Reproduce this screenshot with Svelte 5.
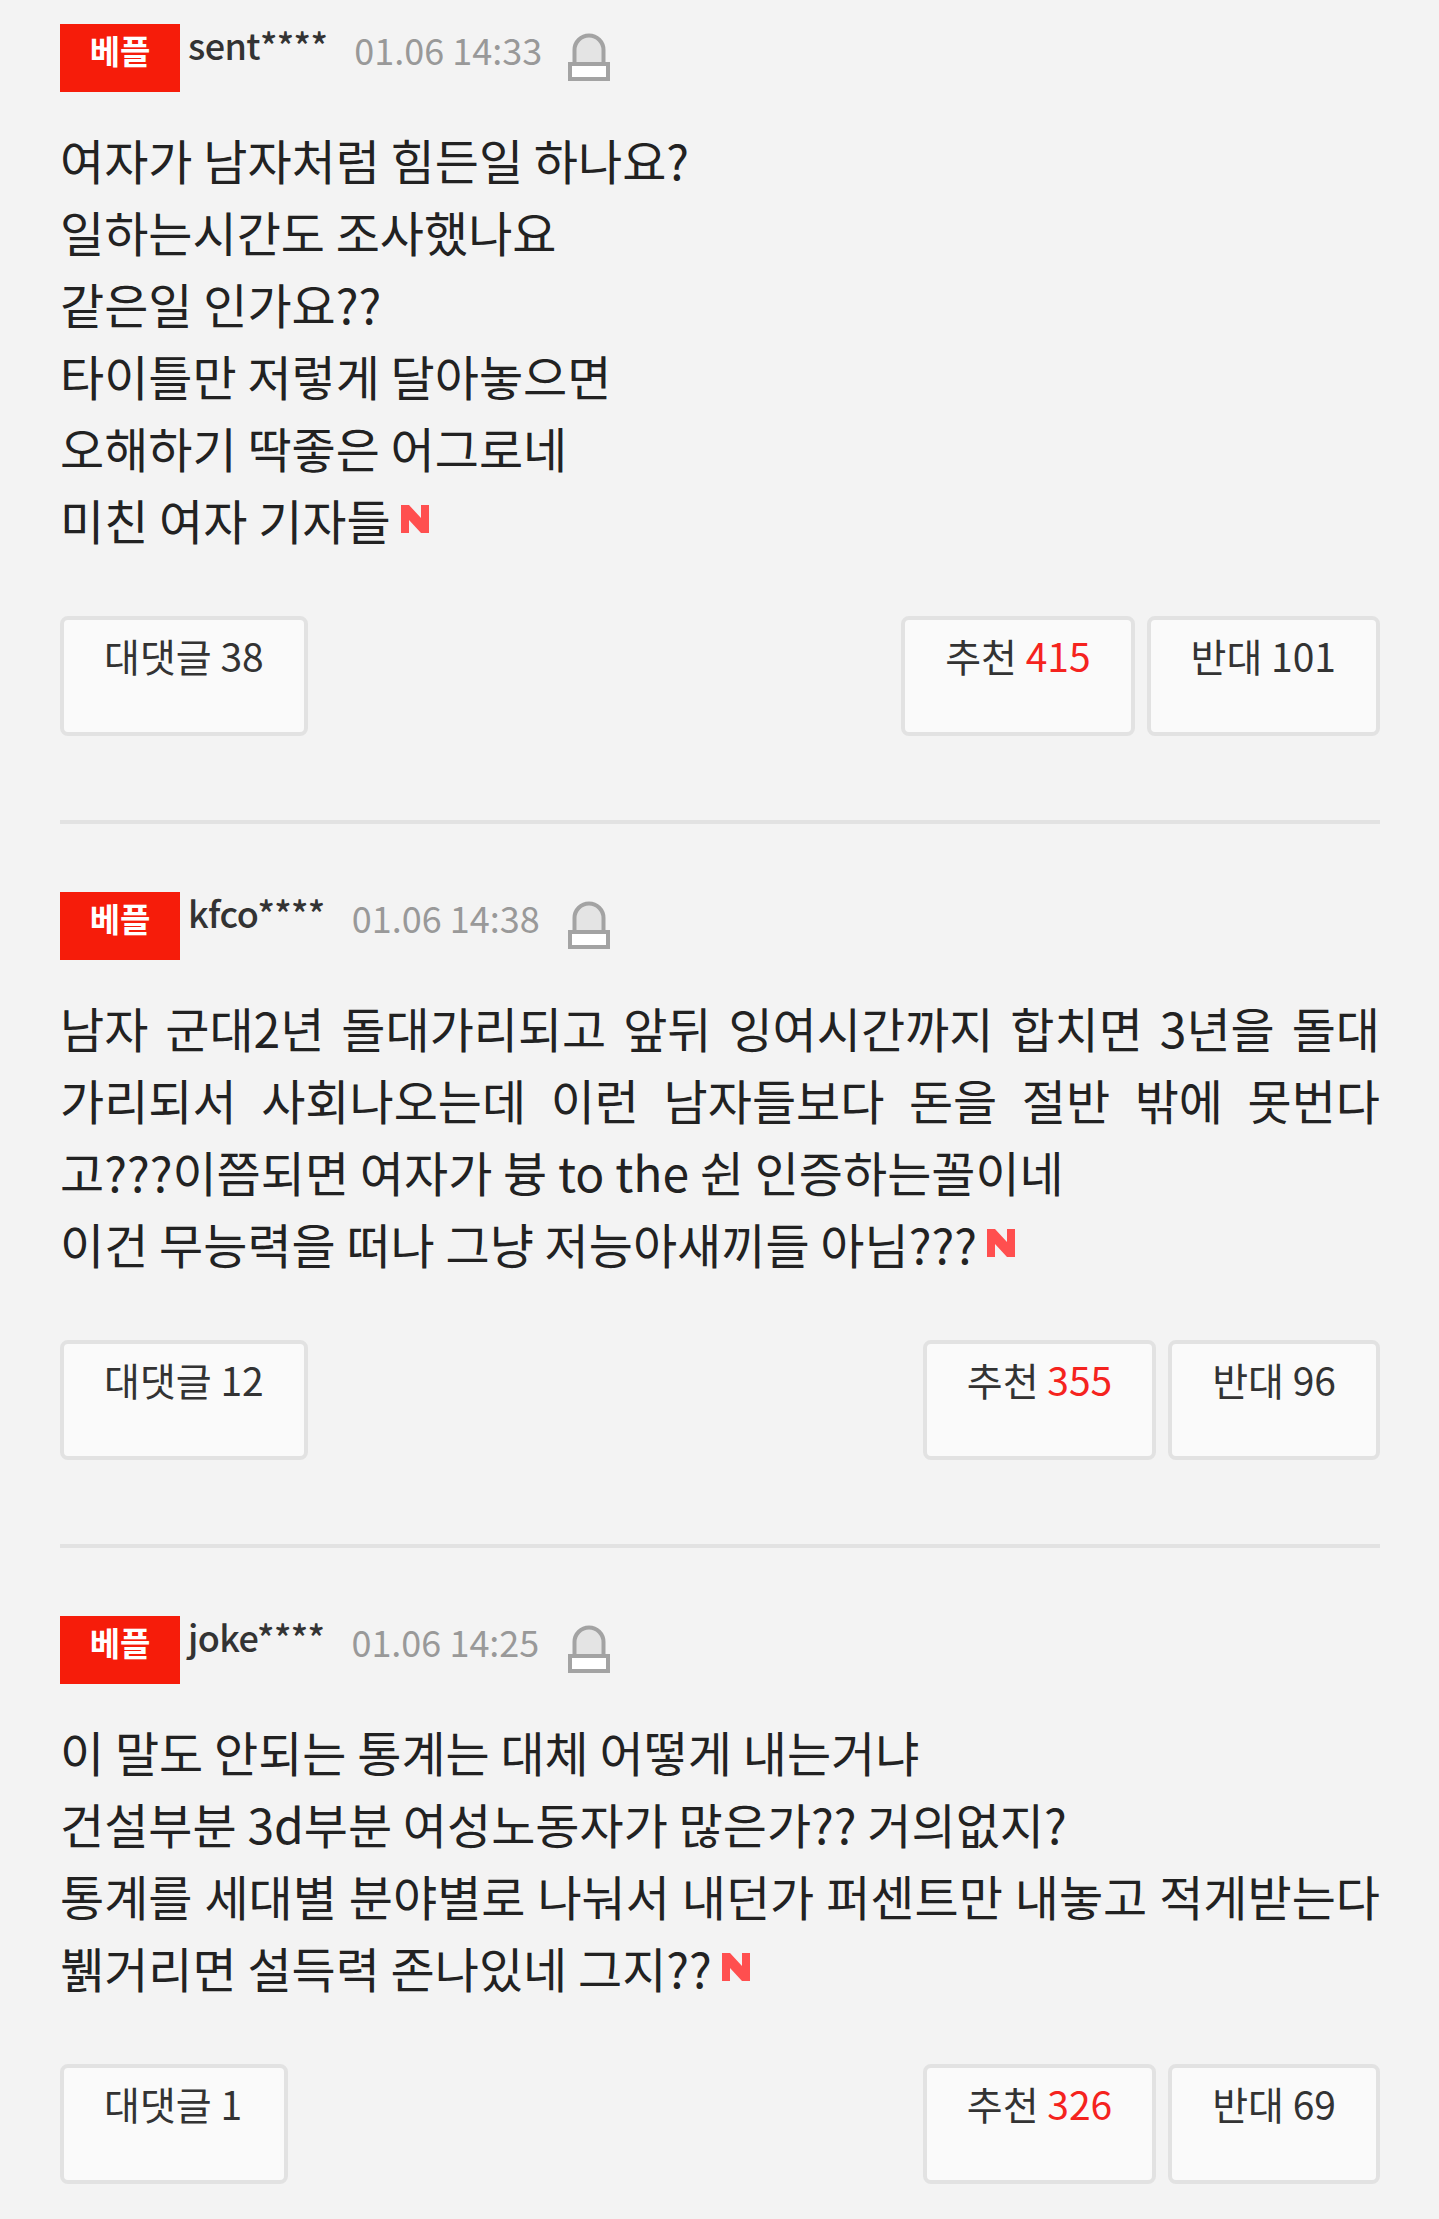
<script>
  const comments = [
    { name: 'sent****', date: '01.06 14:33', lines: ['여자가 남자처럼 힘든일 하나요?', '일하는시간도 조사했나요', '같은일 인가요??', '타이틀만 저렇게 달아놓으면', '오해하기 딱좋은 어그로네', '미친 여자 기자들'], replies: 38, up: 415, down: 101 },
    { name: 'kfco****', date: '01.06 14:38', lines: ['남자 군대2년 돌대가리되고 앞뒤 잉여시간까지 합치면 3년을 돌대가리되서 사회나오는데 이런 남자들보다 돈을 절반 밖에 못번다고???이쯤되면 여자가 븅 to the 쉰 인증하는꼴이네', '이건 무능력을 떠나 그냥 저능아새끼들 아님???'], replies: 12, up: 355, down: 96 },
    { name: 'joke****', date: '01.06 14:25', lines: ['이 말도 안되는 통계는 대체 어떻게 내는거냐', '건설부분 3d부분 여성노동자가 많은가?? 거의없지?', '통계를 세대별 분야별로 나눠서 내던가 퍼센트만 내놓고 적게받는다 뷁거리면 설득력 존나있네 그지??'], replies: 1, up: 326, down: 69 }
  ];
</script>

<main class="list">
  {#each comments as c, i}
    <article class="comment">
      <header class="head">
        <span class="badge">베플</span>
        <span class="meta">
          <span class="name">{c.name}</span>
          <span class="date">{c.date}</span>
        </span>
        <svg class="lamp" width="42" height="49" viewBox="0 0 42 49" aria-hidden="true">
          <path d="M6.500 33V18a14.500 14.500 0 0 1 29 0V33Z" fill="#e4e4e4" stroke="#a3a3a3" stroke-width="4" />
          <rect x="2" y="32" width="38" height="15" fill="#fff" stroke="#a3a3a3" stroke-width="4" />
        </svg>
      </header>
      <p class="body">
        {#each c.lines as line, j}
          {line}{#if j < c.lines.length - 1}<br />{/if}
        {/each}<svg class="new" width="28" height="28" viewBox="0 0 28 28" aria-hidden="true"><path d="M0 0H8L20 13V0H28V28H20L8 15V28H0Z" fill="#ff4f4f" /></svg>
      </p>
      <div class="actions">
        <span class="btn reply">대댓글 {c.replies}</span>
        <span class="votes">
          <span class="btn">추천 <em>{c.up}</em></span>
          <span class="btn">반대 {c.down}</span>
        </span>
      </div>
    </article>
  {/each}
</main>

<style>
  :global(body) {
    margin: 0;
    background: #f3f3f3;
  }
  .list {
    padding: 0 59px 36px 60px;
    font-family: "Noto Sans CJK KR", "Noto Sans", sans-serif;
    color: #222;
  }
  .comment {
    padding: 68px 0 84px;
    border-bottom: 4px solid #e2e2e2;
  }
  .comment:first-child {
    padding-top: 24px;
  }
  .comment:last-child {
    border-bottom: 0;
    padding-bottom: 0;
  }
  .head {
    display: flex;
    align-items: flex-start;
    height: 68px;
  }
  .badge {
    width: 120px;
    height: 68px;
    background: #f61c0a;
    color: #fff;
    font-size: 33px;
    font-weight: 700;
    line-height: 52px;
    text-align: center;
  }
  .meta {
    display: flex;
    align-items: flex-start;
    width: 388px;
  }
  .name {
    margin-left: 8px;
    font-size: 36px;
    font-weight: 500;
    line-height: 40px;
    letter-spacing: -0.6px;
    color: #333;
  }
  .date {
    margin-left: 27px;
    font-size: 36px;
    line-height: 50px;
    color: #999;
  }
  .lamp {
    margin-top: 8px;
  }
  .body {
    margin: 31px 0 61px;
    font-size: 48px;
    line-height: 72px;
    text-align: justify;
    word-break: break-all;
  }
  .new {
    margin-left: 10px;
    vertical-align: 7px;
  }
  .actions {
    display: flex;
    justify-content: space-between;
  }
  .votes {
    display: flex;
    gap: 12px;
  }
  .btn {
    box-sizing: border-box;
    height: 120px;
    padding: 8px 40px;
    border: 4px solid #e2e2e2;
    border-radius: 8px;
    background: #fafafa;
    color: #333;
    font-size: 39px;
    line-height: 54px;
  }
  .reply {
    min-width: 228px;
  }
  em {
    font-style: normal;
    color: #f5231e;
  }
</style>
